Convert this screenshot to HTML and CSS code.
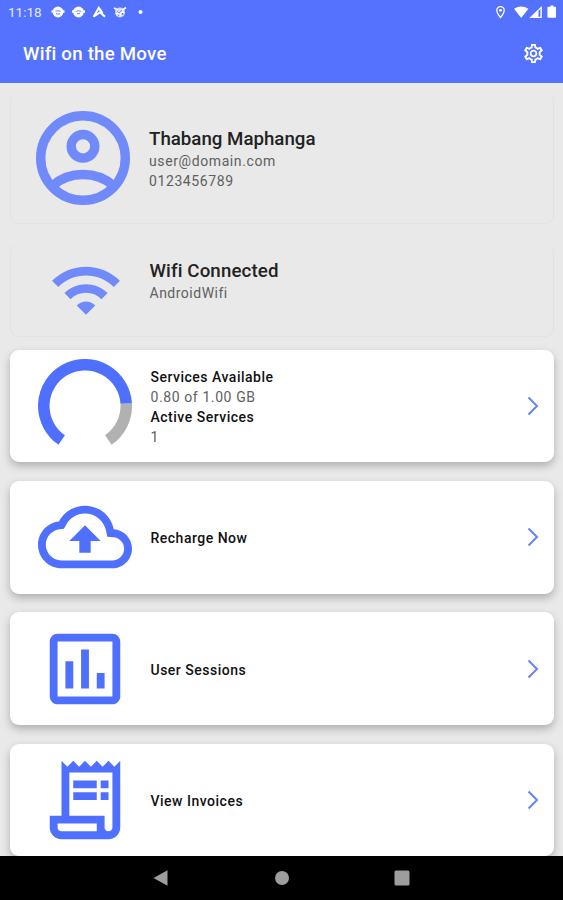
FILE: index.html
```html
<!DOCTYPE html>
<html lang="en">
<head>
    <meta charset="UTF-8">
    <meta name="viewport" content="width=device-width, initial-scale=1.0">
    <title>Wifi on the Move</title>
    <link rel="stylesheet" href="styles.css">
</head>
<body>
    <div class="screen">
        <header class="header">
            <div class="status-bar">
                <span class="time">11:18</span>
                <svg class="status-left" viewBox="0 0 96 14" width="96" height="14">
                    <circle cx="7" cy="7" r="5.4" fill="#fff"/>
                    <path d="M.5 6.500h2M11.500 6.500h2" stroke="#fff" stroke-width="2.5"/>
                    <path d="M4.500 6h5M5 8.600q2 1.200 4 0" fill="none" stroke="#5472fe" stroke-width=".9"/>
                    <circle cx="27.5" cy="7" r="5.4" fill="#fff"/>
                    <path d="M21 6.500h2M32 6.500h2" stroke="#fff" stroke-width="2.5"/>
                    <path d="M24.800 6.500q2.700-1.600 5.400 0M26 8.700h3" fill="none" stroke="#5472fe" stroke-width=".9"/>
                    <path d="M42.500 12l5.300-9.200 1.500 2.800M43 11.500l6-4.200 5 4.500M49 4l2.500 4.500" fill="none" stroke="#fff" stroke-width="2"/>
                    <circle cx="69" cy="7.5" r="5" fill="#fff" opacity=".75"/>
                    <path d="M63 3l4 2M75 2.500l-4 3M65 9l3-1M70 11V8l3-1" stroke="#fff" stroke-width="1.6"/>
                    <path d="M66 6l2 2 3-3M71 8l1.500 2M67 10l1 1" fill="none" stroke="#5472fe" stroke-width=".7"/>
                    <circle cx="89.5" cy="7" r="2" fill="#fff"/>
                </svg>
                <svg class="status-right" viewBox="0 0 62 14" width="62" height="14">
                    <path d="M6.500 1.600c-2.100 0-3.700 1.600-3.700 3.600 0 2.700 3.700 7.300 3.700 7.300s3.700-4.600 3.700-7.300c0-2-1.600-3.600-3.700-3.600z" fill="none" stroke="#fff" stroke-width="1.3"/>
                    <circle cx="6.5" cy="5.3" r="1.4" fill="#fff"/>
                    <path d="M20 3.800q7.200-4.800 14.400 0L27.200 13z" fill="#fff"/>
                    <path d="M35.300 13L47.800 1v12z" fill="#fff"/>
                    <path d="M44.500 5.800v6h1.900V4z" fill="#5472fe"/>
                    <path d="M54.700 1.800h1.800V.6h3v1.200h1.800q.9 0 .7 1v9q0 1-1 1h-6.600q-1 0-1-1v-9q0-1 1.300-1z" fill="#fff"/>
                </svg>
            </div>
            <div class="title-bar">
                <h1>Wifi on the Move</h1>
                <svg class="settings" viewBox="0 0 24 24" fill="#fff">
                    <path d="M19.430 12.980c.04-.32.07-.64.07-.98s-.03-.66-.07-.98l2.110-1.650c.19-.15.24-.42.12-.64l-2-3.460c-.09-.16-.26-.25-.44-.25-.06 0-.12.01-.17.03l-2.490 1c-.52-.4-1.080-.73-1.690-.98l-.38-2.650C14.460 2.180 14.250 2 14 2h-4c-.25 0-.46.18-.49.42l-.38 2.650c-.61.25-1.170.59-1.690.98l-2.490-1c-.06-.02-.12-.03-.18-.03-.17 0-.34.09-.43.25l-2 3.460c-.13.22-.07.49.12.64l2.110 1.650c-.04.32-.07.65-.07.98s.03.66.07.98l-2.110 1.650c-.19.15-.24.42-.12.64l2 3.460c.09.16.26.25.44.25.06 0 .12-.01.17-.03l2.490-1c.52.4 1.080.73 1.690.98l.38 2.650c.03.24.24.42.49.42h4c.25 0 .46-.18.49-.42l.38-2.650c.61-.25 1.170-.59 1.690-.98l2.490 1c.06.02.12.03.18.03.17 0 .34-.09.43-.25l2-3.460c.12-.22.07-.49-.12-.64l-2.110-1.650zm-1.980-1.710c.04.31.05.52.05.73 0 .21-.02.43-.05.73l-.14 1.130.89.7 1.080.84-.7 1.210-1.270-.51-1.040-.42-.9.68c-.43.32-.84.56-1.250.73l-1.060.43-.16 1.130-.2 1.350h-1.400l-.19-1.350-.16-1.130-1.060-.43c-.43-.18-.83-.41-1.230-.71l-.91-.7-1.060.43-1.270.51-.7-1.210 1.080-.84.89-.7-.14-1.130c-.03-.31-.05-.54-.05-.74s.02-.43.05-.73l.14-1.130-.89-.7-1.080-.84.7-1.210 1.270.51 1.040.42.9-.68c.43-.32.84-.56 1.250-.73l1.060-.43.16-1.130.2-1.350h1.390l.19 1.350.16 1.130 1.060.43c.43.18.83.41 1.230.71l.91.7 1.060-.43 1.270-.51.7 1.210-1.070.85-.89.7.14 1.130zM12 8c-2.210 0-4 1.790-4 4s1.790 4 4 4 4-1.790 4-4-1.790-4-4-4zm0 6c-1.100 0-2-.9-2-2s.9-2 2-2 2 .9 2 2-.9 2-2 2z"/>
                </svg>
            </div>
        </header>

        <main class="list">
            <!-- User details -->
            <section class="card flat profile">
                <div class="icon">
                    <svg viewBox="0 0 94 94" width="94" height="94" fill="none" stroke="currentColor" stroke-width="9.4">
                        <circle cx="47" cy="47" r="42.3"/>
                        <circle cx="47" cy="35.3" r="11.8"/>
                        <path d="M17 74.500Q29 63.500 47 63.500T77 74.500"/>
                    </svg>
                </div>
                <div class="info">
                    <h2>Thabang Maphanga</h2>
                    <p>user@domain.com</p>
                    <p>0123456789</p>
                </div>
            </section>

            <section class="card flat wifi">
                <div class="icon">
                    <svg viewBox="0 0 24 24" width="74" height="74" fill="currentColor">
                        <path d="M1 9l2 2c4.970-4.970 13.030-4.970 18 0l2-2C16.930 2.930 7.080 2.930 1 9zm8 8l3 3 3-3c-1.650-1.660-4.340-1.660-6 0zm-4-4l2 2c2.760-2.760 7.240-2.760 10 0l2-2C15.140 9.140 8.870 9.140 5 13z"/>
                    </svg>
                </div>
                <div class="info">
                    <h2>Wifi Connected</h2>
                    <p>AndroidWifi</p>
                </div>
            </section>

            <!-- Menu cards -->
            <section class="card">
                <div class="icon">
                    <svg viewBox="0 0 94 94" width="94" height="94" fill="none" stroke-width="11.5">
                        <path d="M70.300 81A41.250 41.250 0 0 0 88.200 44.500" stroke="#b1b1b1"/>
                        <path d="M23.700 81A41.250 41.250 0 1 1 88.200 44.500" stroke="currentColor"/>
                    </svg>
                </div>
                <div class="info">
                    <h3>Services Available</h3>
                    <p>0.80 of 1.00 GB</p>
                    <h3>Active Services</h3>
                    <p>1</p>
                </div>
                <svg class="chevron" viewBox="0 0 12 20"><path d="M1.500 1.500L10 10l-8.500 8.500"/></svg>
            </section>

            <section class="card">
                <div class="icon">
                    <svg viewBox="0 0 24 24" width="94" height="94" fill="currentColor">
                        <path d="M19.350 10.040C18.670 6.590 15.640 4 12 4 9.110 4 6.610 5.640 5.360 8.040 2.350 8.360 0 10.910 0 14c0 3.310 2.690 6 6 6h13c2.760 0 5-2.240 5-5 0-2.640-2.050-4.780-4.650-4.960zM19 18H6c-2.210 0-4-1.790-4-4 0-2.050 1.530-3.760 3.560-3.970l1.070-.11.5-.95C8.080 7.140 9.940 6 12 6c2.620 0 4.880 1.860 5.390 4.430l.3 1.500 1.530.11c1.560.1 2.780 1.410 2.780 2.960 0 1.650-1.350 3-3 3zM8 13h2.550v3h2.900v-3H16l-4-4z"/>
                    </svg>
                </div>
                <div class="info"><h3>Recharge Now</h3></div>
                <svg class="chevron" viewBox="0 0 12 20"><path d="M1.500 1.500L10 10l-8.500 8.500"/></svg>
            </section>

            <section class="card">
                <div class="icon">
                    <svg viewBox="0 0 24 24" width="94" height="94" fill="currentColor">
                        <path d="M19 3H5c-1.100 0-2 .9-2 2v14c0 1.100.9 2 2 2h14c1.100 0 2-.9 2-2V5c0-1.100-.9-2-2-2zm0 16H5V5h14v14zM7 10h2v7H7zm4-3h2v10h-2zm4 6h2v4h-2z"/>
                    </svg>
                </div>
                <div class="info"><h3>User Sessions</h3></div>
                <svg class="chevron" viewBox="0 0 12 20"><path d="M1.500 1.500L10 10l-8.500 8.500"/></svg>
            </section>

            <section class="card">
                <div class="icon">
                    <svg viewBox="0 0 24 24" width="94" height="94" fill="currentColor">
                        <path d="M19.500 3.500L18 2l-1.500 1.500L15 2l-1.500 1.500L12 2l-1.500 1.500L9 2 7.500 3.500 6 2v14H3v3c0 1.660 1.340 3 3 3h12c1.660 0 3-1.340 3-3V2l-1.500 1.500zM15 20H6c-.55 0-1-.45-1-1v-1h10v2zm4-1c0 .55-.45 1-1 1s-1-.45-1-1v-3H8V5h11v14z"/>
                        <path d="M9 7h6v2H9zM16 7h2v2h-2zM9 10h6v2H9zM16 10h2v2h-2z"/>
                    </svg>
                </div>
                <div class="info"><h3>View Invoices</h3></div>
                <svg class="chevron" viewBox="0 0 12 20"><path d="M1.500 1.500L10 10l-8.500 8.500"/></svg>
            </section>
        </main>

        <nav class="nav-bar">
            <svg viewBox="0 0 16 16"><path d="M.5 8l14-7.700v15.400z"/></svg>
            <svg viewBox="0 0 16 16"><circle cx="8" cy="8" r="7"/></svg>
            <svg viewBox="0 0 16 16"><rect x=".5" y=".5" width="15" height="15" rx="1.5"/></svg>
        </nav>
    </div>
</body>
</html>
```
FILE: styles.css
```css
* {
    box-sizing: border-box;
}

body {
    margin: 0;
    font-family: Roboto, sans-serif;
    background-color: #e9e9e9;
}

h1, h2, h3, p {
    margin: 0;
}

svg {
    display: block;
    flex: none;
}

.screen {
    display: flex;
    flex-direction: column;
    height: 900px;
    overflow: hidden;
}

/* Header */
.header {
    flex: none;
    height: 83px;
    background-color: #5472fe;
    color: #fff;
}

.status-bar {
    display: flex;
    align-items: center;
    height: 24px;
    padding: 0 7px 0 8px;
}

.time {
    width: 43px;
    font-size: 13.5px;
    opacity: 0.85;
}

.status-right {
    margin-left: auto;
}

.title-bar {
    display: flex;
    align-items: center;
    justify-content: space-between;
    height: 59px;
    padding: 0 18.5px 0 23px;
}

.title-bar h1 {
    font-size: 18.7px;
    font-weight: 500;
    letter-spacing: 0.22px;
}

.settings {
    width: 23px;
    height: 23px;
}

/* Cards */
.list {
    flex: 1;
    min-height: 0;
    overflow: hidden;
    padding: 9px 9.5px 0;
}

.card {
    display: flex;
    align-items: center;
    height: 112.5px;
    margin-bottom: 18.8px;
    padding: 0 15px 0 28px;
    background-color: #fff;
    border-radius: 9px;
    box-shadow: 0 4px 8px rgba(0, 0, 0, 0.25);
    color: #4f70fe;
}

.card.flat {
    background-color: transparent;
    border: 1px solid #e2e2e2;
    border-top-color: #e7e7e7;
    box-shadow: none;
    color: #7089fb;
}

.card.profile {
    height: 132px;
    padding-left: 25.5px;
}

.card.wifi {
    height: 94px;
    margin-bottom: 13px;
    padding-left: 28px;
}

.icon {
    display: flex;
    justify-content: center;
    width: 94px;
    margin-right: 19px;
}

.info {
    flex: 1;
    padding-top: 2px;
    color: #606060;
}

.wifi .icon {
    margin-right: 17px;
}

/* text sits above the centre of the wifi icon */
.wifi .info {
    padding: 0 0 18px;
}

.info h2 {
    color: #222;
    font-size: 18.7px;
    line-height: 24px;
    font-weight: 500;
}

.wifi h2 {
    letter-spacing: 0.12px;
}

.info h3 {
    color: #111;
    font-size: 14px;
    line-height: 20px;
    font-weight: 500;
    letter-spacing: 0.5px;
}

.info p {
    font-size: 14px;
    line-height: 20px;
    letter-spacing: 0.6px;
}

.wifi .info p {
    letter-spacing: 0.5px;
}

.chevron {
    width: 12px;
    height: 20px;
    fill: none;
    stroke: #6684f5;
    stroke-width: 2;
}

/* Bottom navigation */
.nav-bar {
    flex: none;
    display: flex;
    justify-content: center;
    align-items: center;
    gap: 104.5px;
    height: 44px;
    background-color: #000;
}

.nav-bar svg {
    width: 16px;
    height: 16px;
    fill: #9d9d9d;
}
```
